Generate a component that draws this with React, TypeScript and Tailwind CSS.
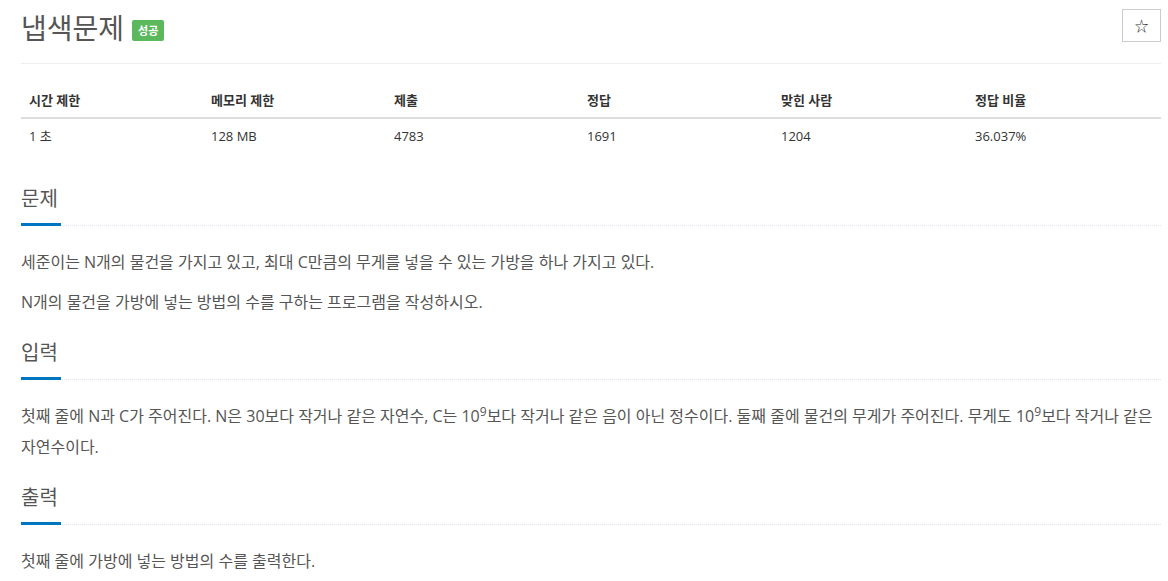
import React from "react";

const font = { fontFamily: '"Open Sans", "Noto Sans CJK KR", sans-serif' };

function Headline({ children }: { children: React.ReactNode }) {
  return (
    <div className="relative border-b border-dotted border-[#dde6ee] mb-[21px]">
      <h2 className="text-[20px] leading-[30px] text-[#555] pb-[11px] pt-[3px]">{children}</h2>
      <div className="absolute left-0 -bottom-[1px] h-[3px] w-[40px] bg-[#0076c0]" />
    </div>
  );
}

export default function App() {
  const heads = ["시간 제한", "메모리 제한", "제출", "정답", "맞힌 사람", "정답 비율"];
  const vals = ["1 초", "128 MB", "4783", "1691", "1204", "36.037%"];
  const widths = ["w-[182px]", "w-[183px]", "w-[193px]", "w-[194px]", "w-[194px]", ""];
  return (
    <div className="w-[1168px] h-[581px] bg-white overflow-hidden text-[#333] text-[14px]" style={font}>
      <div className="pl-[21px] pr-[7px]">
        <div className="flex items-start justify-between pt-[9px] pb-[19px] border-b border-[#eee]">
          <div className="flex items-center mt-[3px]">
            <span className="text-[28px] leading-[32px] text-[#555]">냅색문제</span>
            <span className="ml-[8px] mt-[4px] bg-[#5cb85c] text-white text-[11px] font-bold px-[6px] leading-[21px] rounded-[2px]">성공</span>
          </div>
          <button className="w-[39px] h-[33px] border border-[#ccc] bg-white flex items-center justify-center text-[14px] text-[#333]">☆</button>
        </div>
        <table className="mt-[18px] w-full border-collapse">
          <thead>
            <tr className="border-b-2 border-[#ddd]">
              {heads.map((h, i) => (
                <th key={i} className={`text-left font-bold text-[13px] px-[8px] pt-[8px] pb-[7px] leading-[20px] ${widths[i]}`}>{h}</th>
              ))}
            </tr>
          </thead>
          <tbody>
            <tr>
              {vals.map((v, i) => (
                <td key={i} className="text-left text-[13px] px-[8px] pt-[7px] pb-[8px] leading-[20px]">{v}</td>
              ))}
            </tr>
          </tbody>
        </table>
        <div className="mt-[27px]">
          <Headline>문제</Headline>
          <div className="text-[16px] leading-[30px] text-[#555]">
            <p className="mb-[10px]">세준이는 N개의 물건을 가지고 있고, 최대 C만큼의 무게를 넣을 수 있는 가방을 하나 가지고 있다.</p>
            <p className="mb-[10px]">N개의 물건을 가방에 넣는 방법의 수를 구하는 프로그램을 작성하시오.</p>
          </div>
        </div>
        <div className="mt-[18px]">
          <Headline>입력</Headline>
          <div className="text-[16px] leading-[31px] text-[#555]">
            <p className="mb-[10px]">
              첫째 줄에 N과 C가 주어진다. N은 30보다 작거나 같은 자연수, C는 10<sup className="text-[12px] leading-none">9</sup>보다 작거나 같은 음이 아닌 정수이다. 둘째 줄에 물건의 무게가 주어진다. 무게도 10<sup className="text-[12px] leading-none">9</sup>보다 작거나 같은 자연수이다.
            </p>
          </div>
        </div>
        <div className="mt-[17px]">
          <Headline>출력</Headline>
          <div className="text-[16px] leading-[30px] text-[#555]">
            <p className="mb-[10px]">첫째 줄에 가방에 넣는 방법의 수를 출력한다.</p>
          </div>
        </div>
      </div>
    </div>
  );
}
